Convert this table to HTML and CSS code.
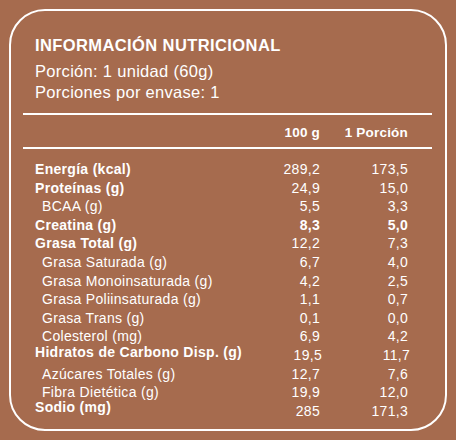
FILE: index.html
```html
<!DOCTYPE html>
<html lang="es">

<head>
  <meta charset="UTF-8">
  <meta name="viewport" content="width=device-width, initial-scale=1.0">
  <title>Información nutricional</title>
  <link rel="stylesheet" href="styles.css">
</head>

<body>

  <main class="main__card">
    <div class="card__info">
      <h1 class="info__title">INFORMACIÓN NUTRICIONAL</h1>
      <p class="info__line">Porción: 1 unidad (60g)</p>
      <p class="info__line">Porciones por envase: 1</p>
    </div>

    <div class="card__head">
      <span></span>
      <span>100 g</span>
      <span>1 Porción</span>
    </div>

    <div class="card__table">
      <div class="row row--bold"><span>Energía (kcal)</span><span class="row__value">289,2</span><span class="row__value">173,5</span></div>
      <div class="row row--bold"><span>Proteínas (g)</span><span class="row__value">24,9</span><span class="row__value">15,0</span></div>
      <div class="row row--sub"><span>BCAA (g)</span><span>5,5</span><span>3,3</span></div>
      <div class="row row--bold"><span>Creatina (g)</span><span>8,3</span><span>5,0</span></div>
      <div class="row row--bold"><span>Grasa Total (g)</span><span class="row__value">12,2</span><span class="row__value">7,3</span></div>
      <div class="row row--sub"><span>Grasa Saturada (g)</span><span>6,7</span><span>4,0</span></div>
      <div class="row row--sub"><span>Grasa Monoinsaturada (g)</span><span>4,2</span><span>2,5</span></div>
      <div class="row row--sub"><span>Grasa Poliinsaturada (g)</span><span>1,1</span><span>0,7</span></div>
      <div class="row row--sub"><span>Grasa Trans (g)</span><span>0,1</span><span>0,0</span></div>
      <div class="row row--sub"><span>Colesterol (mg)</span><span>6,9</span><span>4,2</span></div>
      <div class="row row--bold"><span class="row__label--up">Hidratos de Carbono Disp. (g)</span><span class="row__value">19,5</span><span class="row__value">11,7</span></div>
      <div class="row row--sub"><span>Azúcares Totales (g)</span><span>12,7</span><span>7,6</span></div>
      <div class="row row--sub"><span>Fibra Dietética (g)</span><span>19,9</span><span>12,0</span></div>
      <div class="row row--bold"><span class="row__label--up-more">Sodio (mg)</span><span class="row__value">285</span><span class="row__value">171,3</span></div>
    </div>
  </main>

</body>

</html>
```

FILE: styles.css
```css
:root {
  --clr-bg: #a66b4e;
  --clr-white: #ffffff;

  --fnt-main: "Liberation Sans", Arial, sans-serif;
}

* {
  box-sizing: border-box;
  margin: 0;
  padding: 0;
}

body {
  font-family: var(--fnt-main);
  background-color: var(--clr-bg);
  color: var(--clr-white);
}

.main__card {
  margin: 9px;
  height: 422px;
  border: 2px solid var(--clr-white);
  border-radius: 36px;
  padding: 24px 13px 0 12px;
}

.card__info {
  padding: 0 12px 10px;
  border-bottom: 2px solid var(--clr-white);
}

.info__title {
  font-size: 16.5px;
  line-height: 20px;
  font-weight: 700;
  letter-spacing: .4px;
  margin-bottom: 6px;
}

.info__line {
  font-size: 16.5px;
  line-height: 21px;
  letter-spacing: .3px;
}

.card__head {
  display: grid;
  grid-template-columns: 1fr 80px 88px;
  padding: 9px 24px 5px 12px;
  font-size: 13.5px;
  line-height: 18px;
  font-weight: 700;
  letter-spacing: .2px;
  text-align: right;
  border-bottom: 2px solid var(--clr-white);
}

.card__table {
  padding: 11px 24px 0 12px;
}

.row {
  display: grid;
  grid-template-columns: 1fr 80px 88px;
  align-items: start;
  font-size: 14px;
  line-height: 18.6px;
  letter-spacing: .3px;
  white-space: nowrap;
}

.row span:not(:first-child) {
  text-align: right;
}

.row--bold {
  font-weight: 700;
}

.row--sub span:first-child {
  padding-left: 7px;
}

.row__value {
  font-weight: 400;
}

.row__label--up {
  line-height: 13.6px;
}

.row__label--up-more {
  line-height: 11.6px;
}
```
